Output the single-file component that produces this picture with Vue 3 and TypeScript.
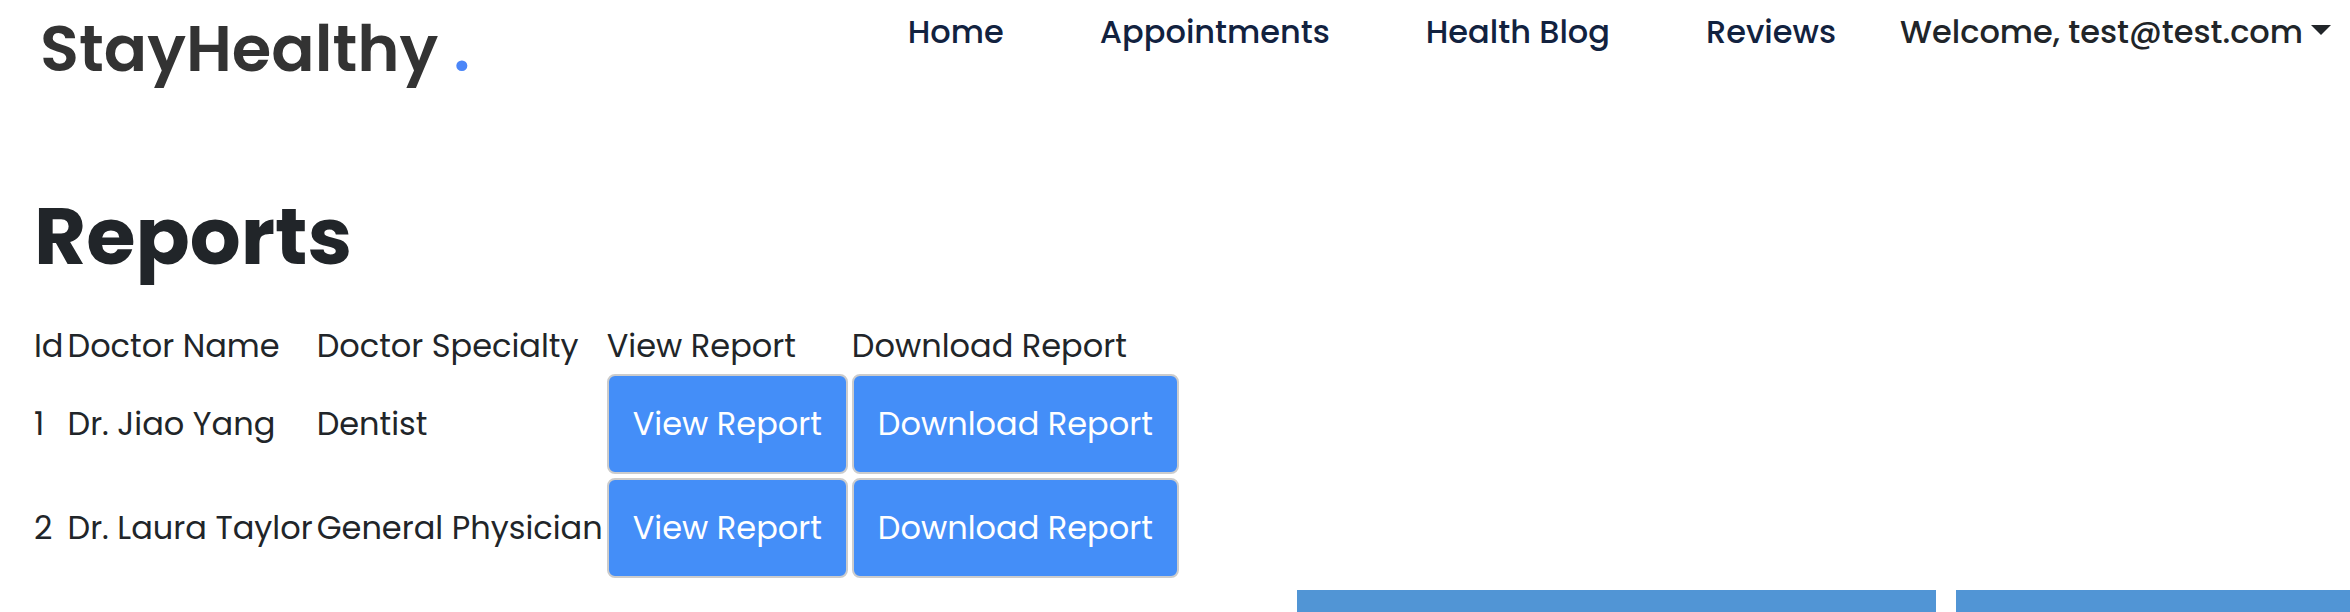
<script setup lang="ts">
interface Report {
  id: number
  doctor: string
  specialty: string
}

const links: string[] = ['Home', 'Appointments', 'Health Blog', 'Reviews']
const reports: Report[] = [
  { id: 1, doctor: 'Dr. Jiao Yang', specialty: 'Dentist' },
  { id: 2, doctor: 'Dr. Laura Taylor', specialty: 'General Physician' },
]
</script>

<template>
  <div class="page">
    <header class="bar">
      <a class="brand" href="#">StayHealthy <span class="dot">.</span></a>
      <nav class="nav">
        <a v-for="link in links" :key="link" class="link" href="#">{{ link }}</a>
        <button class="user" type="button">Welcome, test@test.com<span class="caret"></span></button>
      </nav>
    </header>
    <main class="reports">
      <h1 class="title">Reports</h1>
      <table class="table">
        <thead>
          <tr>
            <th scope="col">Id</th>
            <th scope="col">Doctor Name</th>
            <th scope="col">Doctor Specialty</th>
            <th scope="col">View Report</th>
            <th scope="col">Download Report</th>
          </tr>
        </thead>
        <tbody>
          <tr v-for="report in reports" :key="report.id">
            <td>{{ report.id }}</td>
            <td>{{ report.doctor }}</td>
            <td>{{ report.specialty }}</td>
            <td><button class="action" type="button">View Report</button></td>
            <td><button class="action" type="button">Download Report</button></td>
          </tr>
        </tbody>
      </table>
    </main>
    <div class="panels">
      <div class="panel"></div>
      <div class="panel"></div>
    </div>
  </div>
</template>

<style>
body {
  margin: 0;
  background: #fff;
}
</style>

<style scoped>
.page {
  box-sizing: border-box;
  display: flex;
  flex-direction: column;
  min-height: 100vh;
  overflow: hidden;
  color: #212529;
  font-family: Poppins, Inter, sans-serif;
  font-size: 32px;
  line-height: 48px;
}
.bar {
  display: flex;
  justify-content: space-between;
  align-items: flex-start;
  padding: 0 19px 0 40px;
}
.brand {
  color: #333;
  font-size: 64px;
  font-weight: 600;
  line-height: 98px;
  text-decoration: none;
  white-space: nowrap;
}
.dot {
  color: #4b86f8;
}
.nav {
  display: flex;
  padding-top: 8px;
  font-weight: 500;
  white-space: nowrap;
}
.link {
  margin-right: 96px;
  color: #12223f;
  text-decoration: none;
}
.link:nth-child(4) {
  margin-right: 64px;
}
.user {
  padding: 0;
  border: 0;
  background: none;
  color: inherit;
  font: inherit;
}
.caret {
  display: inline-block;
  margin-left: 8px;
  border: 10px solid transparent;
  border-top-color: currentColor;
  border-bottom: 0;
  vertical-align: 8px;
}
.reports {
  padding: 90px 30px 8px;
}
.title {
  margin: 0;
  padding: 0 4px;
  font-size: 80px;
  font-weight: 700;
  line-height: 96px;
}
.table {
  margin-top: 34px;
  border-spacing: 4px;
}
th,
td {
  padding: 0;
  font-weight: 400;
  text-align: left;
  white-space: nowrap;
}
.action {
  display: block;
  width: 100%;
  height: 100px;
  padding: 0 24px;
  border: 2px solid #ccc;
  border-radius: 8px;
  background: #448ef8;
  color: #fff;
  font: inherit;
}
.panels {
  display: flex;
  flex: 1;
  gap: 20px;
  min-height: 16px;
  padding-left: 55.2%;
}
.panel {
  flex: 0 0 639px;
  background: #5195d5;
}
</style>
